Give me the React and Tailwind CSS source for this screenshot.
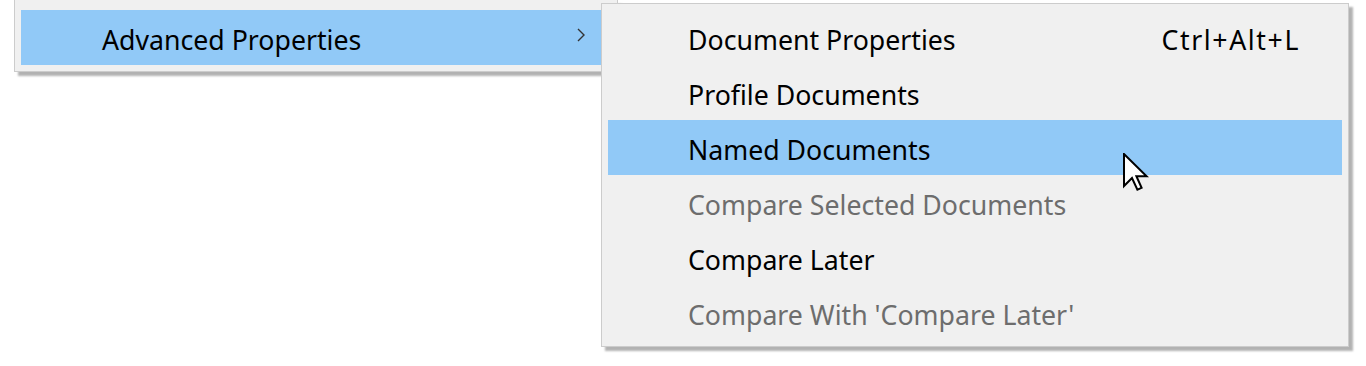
import React from "react";

const FONT = { fontFamily: "'Noto Sans', 'Open Sans', sans-serif" };

const SUB_ITEMS = [
  { label: "Document Properties", shortcut: "Ctrl+Alt+L" },
  { label: "Profile Documents" },
  { label: "Named Documents", active: true },
  { label: "Compare Selected Documents", disabled: true },
  { label: "Compare Later" },
  { label: "Compare With 'Compare Later'", disabled: true },
];

const Cursor = () => (
  <svg width="26" height="38" viewBox="0 0 13 19" className="absolute left-[1123px] top-[153px]">
    <path
      d="M0.5 0.5 L0.5 16.5 L4.5 12.5 L7.2 18.3 L9.3 17.4 L6.7 11.6 L11.8 11.6 Z"
      fill="#fff"
      stroke="#000"
      strokeWidth="1"
      strokeLinejoin="miter"
    />
  </svg>
);

const SubMenu = () => (
  <div className="absolute left-[601px] top-[3px] w-[748px] border border-[#cccccc] bg-[#f0f0f0] px-[6px] py-[6px] shadow-[4px_4px_2px_rgba(0,0,0,0.3)]">
    {SUB_ITEMS.map((item) => (
      <div
        key={item.label}
        className={`flex h-[55px] items-center pt-[6px] pl-[80px] pr-[42px] text-[26.7px] ${
          item.active ? "bg-[#91c9f7]" : ""
        } ${item.disabled ? "text-[#6d6d6d]" : "text-black"}`}
      >
        <span>{item.label}</span>
        {item.shortcut && <span className="ml-auto tracking-[1.6px]">{item.shortcut}</span>}
      </div>
    ))}
  </div>
);

export default function App() {
  return (
    <div className="relative h-[366px] w-[1366px] overflow-hidden bg-white" style={FONT}>
      {/* parent menu, top is cut off */}
      <div className="ml-[14px] w-[604px] border-x border-b border-[#cccccc] bg-[#f0f0f0] px-[6px] pt-[10px] pb-[6px] shadow-[4px_4px_2px_rgba(0,0,0,0.3)]">
        <div className="flex h-[55px] items-center bg-[#91c9f7] pt-[6px] pl-[81px] pr-[26px] text-[26.7px] text-black">
          <span>Advanced Properties</span>
          <svg width="8" height="14" viewBox="0 0 8 14" className="ml-auto -mt-[11px]">
            <polyline points="1,1 7,7 1,13" fill="none" stroke="#333" strokeWidth="1.4" />
          </svg>
        </div>
      </div>
      <SubMenu />
      <Cursor />
    </div>
  );
}
